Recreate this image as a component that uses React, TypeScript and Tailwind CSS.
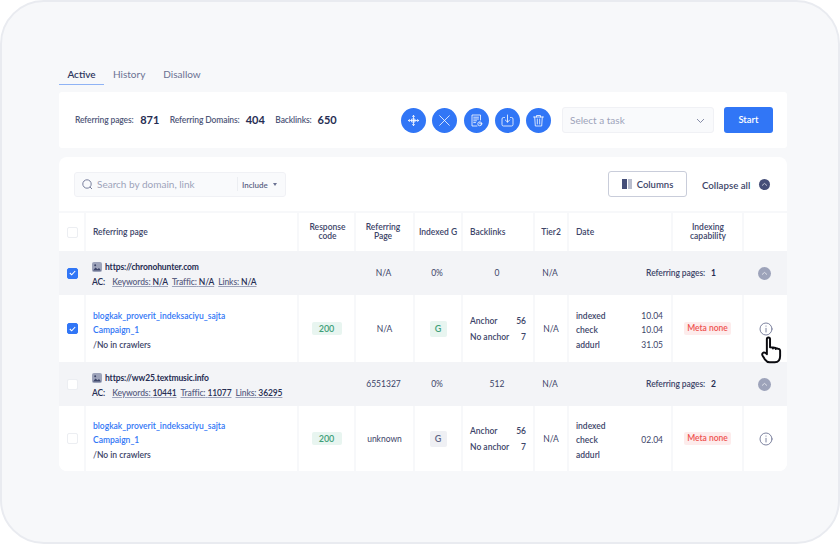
const COLS = "grid grid-cols-[25px_213px_57px_59px_48px_72px_34px_104px_71px_45px]";
const border = "flex items-center border-l-2 border-[#f7f8fa]";
const cell = `${border} justify-center text-center`;

function Check({ on }: { on?: boolean }) {
  return (
    <span className={`flex h-[11px] w-[11px] items-center justify-center rounded-[2px] border ${on ? "border-[#3176f6] bg-[#3176f6]" : "border-[#eceef2] bg-white"}`}>
      {on && (
        <svg width="7" height="6" viewBox="0 0 7 6" fill="none">
          <path d="M0.8 3L2.7 4.8L6.2 1" stroke="white" strokeWidth="1.1" />
        </svg>
      )}
    </span>
  );
}

function Circle({ children }: { children: React.ReactNode }) {
  return (
    <span className="flex h-[25px] w-[25px] items-center justify-center rounded-full bg-[#3176f6]">
      <svg width="15" height="15" viewBox="0 0 15 15" fill="none" stroke="white" strokeWidth="0.8" strokeLinecap="round" strokeLinejoin="round">
        {children}
      </svg>
    </span>
  );
}

function Chevron({ dark }: { dark?: boolean }) {
  return (
    <span className={`flex items-center justify-center rounded-full ${dark ? "h-[11px] w-[11px] bg-[#454e78]" : "h-[13px] w-[13px] bg-[#9da3ba]"}`}>
      <svg width="7" height="5" viewBox="0 0 7 5" fill="none">
        <path d="M1 3.6L3.5 1.4L6 3.6" stroke="white" strokeOpacity="0.8" strokeWidth="0.8" />
      </svg>
    </span>
  );
}

function Info() {
  return (
    <svg width="14" height="14" viewBox="0 0 14 14" fill="none" stroke="#6f7695" strokeWidth="0.9" strokeLinecap="round">
      <circle cx="7" cy="7" r="6" />
      <path d="M7 6.3V10" />
      <path d="M7 4V4.2" />
    </svg>
  );
}

function Group(props: { checked?: boolean; url: string; kw: string; tr: string; li: string; page: string; bl: string; count: string }) {
  return (
    <div className={`${COLS} h-[44px] bg-[#f3f4f7] text-[8.5px] text-[#3c4468]`}>
      <div className="flex items-center justify-center pl-[1px]"><Check on={props.checked} /></div>
      <div className="flex flex-col justify-center gap-[2px] pl-[8px] pt-[3px] tracking-[-0.12px]">
        <div className="flex items-center gap-[3px]">
          <svg width="10" height="10" viewBox="0 0 10 10" className="-mt-[1px]">
            <rect width="10" height="10" rx="2" fill="#9da3ba" />
            <path d="M1 8.5L3.5 5.5L5.5 7.2L7 6L9 8.5Z" fill="#3c4468" />
            <circle cx="3.2" cy="3.2" r="1" fill="#3c4468" />
          </svg>
          <span className="font-bold text-[#262d52]">{props.url}</span>
        </div>
        <div className="flex gap-[4px] font-semibold">
          <span className="mr-[3px] text-[#262d52]">AC:</span>
          <span className="underline decoration-[#9da3ba]"><span className="text-[#5b6284]">Keywords:</span> <span className="text-[#262d52]">{props.kw}</span></span>
          <span className="underline decoration-[#9da3ba]"><span className="text-[#5b6284]">Traffic:</span> <span className="text-[#262d52]">{props.tr}</span></span>
          <span className="underline decoration-[#9da3ba]"><span className="text-[#5b6284]">Links:</span> <span className="text-[#262d52]">{props.li}</span></span>
        </div>
      </div>
      <div />
      <div className="flex items-center justify-center pt-[1px]">{props.page}</div>
      <div className="flex items-center justify-center pt-[1px]">0%</div>
      <div className="flex items-center justify-center pt-[1px]">{props.bl}</div>
      <div className="flex items-center justify-center pt-[1px]">N/A</div>
      <div className="col-span-2 flex items-center justify-end gap-[6px] pr-[26px] pt-[1px] font-semibold">
        <span className="tracking-[-0.1px]">Referring pages:</span>
        <span className="font-bold text-[#262d52]">{props.count}</span>
      </div>
      <div className="flex items-center justify-center"><Chevron /></div>
    </div>
  );
}

function Row(props: { checked?: boolean; page: string; gTone: string; dates: string[]; single?: boolean; h: string }) {
  return (
    <div className={`${COLS} ${props.h} bg-white text-[8.5px] text-[#3c4468]`}>
      <div className="flex items-center justify-center pl-[1px]"><Check on={props.checked} /></div>
      <div className="flex flex-col justify-center gap-[3.5px] border-l-2 border-[#f7f8fa] pl-[7px] pt-[4px] font-semibold leading-[11px]">
        <span className="text-[#3176f6]">blogkak_proverit_indeksaciyu_sajta</span>
        <span className="text-[#3176f6]">Campaign_1</span>
        <span className="text-[#3c4468]">/No in crawlers</span>
      </div>
      <div className={cell}>
        <span className="flex h-[13px] w-[30px] items-center justify-center rounded-[2px] bg-[#e8f5f0] text-[9px] font-semibold text-[#3f9f78]">200</span>
      </div>
      <div className={`${cell} pt-[1px]`}>{props.page}</div>
      <div className={cell}>
        <span className={`flex h-[16px] w-[17px] items-center justify-center rounded-[2px] text-[9px] font-semibold ${props.gTone}`}>G</span>
      </div>
      <div className={`${border} flex-col justify-center gap-[5px] px-[7px] pt-[1px] font-semibold`}>
        <div className="flex w-full justify-between leading-[11px]"><span>Anchor</span><span>56</span></div>
        <div className="flex w-full justify-between leading-[11px]"><span>No anchor</span><span>7</span></div>
      </div>
      <div className={`${cell} pt-[1px]`}>N/A</div>
      <div className={`${border} justify-between pl-[7px] pr-[8px] pt-[4px]`}>
        <div className="flex flex-col gap-[3.5px] text-left font-semibold leading-[11px]">
          <span>indexed</span><span>check</span><span>addurl</span>
        </div>
        {props.single ? (
          <span>{props.dates[0]}</span>
        ) : (
          <div className="flex flex-col gap-[3.5px] text-right leading-[11px]">
            {props.dates.map((d, i) => <span key={i}>{d}</span>)}
          </div>
        )}
      </div>
      <div className={cell}>
        <span className="flex h-[13px] w-[47px] items-center justify-center rounded-[2px] bg-[#fdecec] text-[8.5px] font-semibold text-[#ef5350]">Meta none</span>
      </div>
      <div className={cell}><Info /></div>
    </div>
  );
}

export default function App() {
  return (
    <div className="relative h-[544px] w-[840px] bg-white" style={{ fontFamily: '"Lato", "Liberation Sans", sans-serif' }}>
      <div className="h-[544px] w-[840px] overflow-hidden rounded-[44px] border-2 border-[#e9ebf0] bg-[#f7f8fa] px-[57px] pt-[64px]">
        <div className="flex h-[19px] pt-[1px] text-[10px]">
          <span className="flex w-[45px] justify-center border-b border-[#8fb3f5] font-semibold text-[#2f3760]">Active</span>
          <span className="ml-[9px] text-[#6a7192]">History</span>
          <span className="ml-[18px] text-[#6a7192]">Disallow</span>
        </div>
        <div className="mt-[7px] flex h-[56px] w-[728px] items-center rounded-[3px] bg-white pl-[16px] pr-[14px]">
          <div className="flex w-[325px] items-center text-[8.5px] font-semibold tracking-[-0.12px] text-[#4f5779]">
            <span>Referring pages:</span>
            <span className="ml-[6.5px] text-[11px] font-bold tracking-normal text-[#262d52]">871</span>
            <span className="ml-[10.5px]">Referring Domains:</span>
            <span className="ml-[6px] text-[11px] font-bold tracking-normal text-[#262d52]">404</span>
            <span className="ml-[10.5px]">Backlinks:</span>
            <span className="ml-[6px] text-[11px] font-bold tracking-normal text-[#262d52]">650</span>
          </div>
          <div className="ml-[1px] flex gap-[6.3px]">
            <Circle>
              <path d="M7.5 2.5V12.5M2.5 7.5H12.5" />
              <path d="M6.5 3.5L7.5 2.3L8.5 3.5M6.5 11.5L7.5 12.7L8.5 11.5M3.5 6.5L2.3 7.5L3.5 8.5M11.5 6.5L12.7 7.5L11.5 8.5" />
              <rect x="6" y="6" width="3" height="3" />
            </Circle>
            <Circle><path d="M2.7 2.7L12.3 12.3M12.3 2.7L2.7 12.3" /></Circle>
            <Circle>
              <path d="M11.5 7V2H3V13H8" />
              <path d="M4.7 4.2H9.5M4.7 6H9.5M4.7 7.8H7.5M4.7 9.6H6.5" />
              <circle cx="10.8" cy="10.8" r="2" />
              <path d="M10.8 9.8V10.9H11.7" />
            </Circle>
            <Circle>
              <path d="M4.5 4.5H3.5A1.5 1.5 0 0 0 2 6V11.5A1.5 1.5 0 0 0 3.5 13H11.5A1.5 1.5 0 0 0 13 11.5V6A1.5 1.5 0 0 0 11.5 4.5H10.5" />
              <path d="M7.5 2V9M5.3 7L7.5 9.2L9.7 7" />
            </Circle>
            <Circle>
              <path d="M2.5 4H12.5M5.5 4V2.5H9.5V4M3.7 4L4.3 13H10.7L11.3 4M6.3 6V11M8.7 6V11" />
            </Circle>
          </div>
          <div className="ml-[10.8px] flex h-[26px] w-[152px] items-center justify-between rounded-[3px] border border-[#f0f1f5] bg-[#f9fafc] pl-[7px] pr-[8px] pt-[1px] text-[10px] text-[#9da3ba]">
            <span>Select a task</span>
            <svg width="9" height="6" viewBox="0 0 9 6" fill="none"><path d="M1 1L4.5 4.5L8 1" stroke="#6a7192" strokeWidth="0.8" /></svg>
          </div>
          <button className="ml-[10px] flex h-[26px] w-[49px] items-center justify-center rounded-[3px] bg-[#3176f6] pt-[1px] text-[9.5px] font-semibold text-white">Start</button>
        </div>

        <div className="mt-[9px] w-[728px] overflow-hidden rounded-[8px] bg-white">
          <div className="flex h-[54px] items-center pl-[15px] pr-[15px]">
            <div className="flex h-[25px] w-[212px] items-center rounded-[3px] border border-[#f0f1f5] bg-[#f9fafc] pl-[7px]">
              <svg width="11" height="11" viewBox="0 0 11 11" fill="none" stroke="#6a7192" strokeWidth="0.9"><circle cx="5" cy="5" r="4.2" /><path d="M8 8L10 10" /></svg>
              <span className="ml-[4px] w-[140px] pt-[1px] text-[10px] text-[#9da3ba]">Search by domain, link</span>
              <span className="flex h-[14px] items-center gap-[5px] border-l border-[#eceef2] pl-[4px] pt-[1px] text-[8px] font-semibold text-[#5b6284]">
                Include
                <svg width="4" height="3" viewBox="0 0 4 3"><path d="M0 0H4L2 3Z" fill="#6a7192" /></svg>
              </span>
            </div>
            <button className="ml-[322px] flex h-[26px] w-[79px] items-center justify-center gap-[5px] rounded-[3px] border border-[#c9cdda] bg-white pt-[2px] text-[9.5px] font-semibold text-[#3c4468]">
              <span className="-mt-[2px] flex h-[10px]">
                <span className="w-[5px] bg-[#454e78]" />
                <span className="ml-[1px] w-[4px] bg-[#b9bdcd]" />
              </span>
              Columns
            </button>
            <span className="ml-[15px] pt-[2px] text-[9.7px] font-semibold text-[#3c4468]">Collapse all</span>
            <span className="ml-[9px]"><Chevron dark /></span>
          </div>

          <div className={`${COLS} h-[40px] border-t-2 border-[#f7f8fa] text-[8.5px] font-semibold leading-[9px] text-[#3c4468]`}>
            <div className="flex items-center justify-center pl-[1px]"><Check /></div>
            <div className={`${border} pl-[7px]`}>Referring page</div>
            <div className={`${cell} pl-[2px]`}>Response<br />code</div>
            <div className={`${cell} pr-[3px]`}>Referring<br />Page</div>
            <div className={cell}>Indexed G</div>
            <div className={`${border} pl-[7px]`}>Backlinks</div>
            <div className={cell}>Tier2</div>
            <div className={`${border} pl-[7px]`}>Date</div>
            <div className={`${cell} pl-[1px]`}>Indexing<br />capability</div>
            <div className={cell} />
          </div>

          <Group checked url="https://chronohunter.com" kw="N/A" tr="N/A" li="N/A" page="N/A" bl="0" count="1" />
          <Row checked page="N/A" gTone="bg-[#e8f5f0] text-[#3f9f78]" dates={["10.04", "10.04", "31.05"]} h="h-[67px]" />
          <Group url="https://ww25.textmusic.info" kw="10441" tr="11077" li="36295" page="6551327" bl="512" count="2" />
          <Row page="unknown" gTone="bg-[#eff0f4] text-[#5b6284]" dates={["02.04"]} single h="h-[65px]" />
        </div>
      </div>

      <svg className="absolute left-[760px] top-[336px]" width="24" height="28" viewBox="0 0 24 30" fill="white" stroke="#0b0b10" strokeWidth="2.1" strokeLinejoin="round" strokeLinecap="round">
        <path d="M6.5 17V3.2A1.7 1.7 0 0 1 9.9 3.2V12L13 12.3V13.5V12.3L16 12.8V14V13L18.5 13.6A2.3 2.3 0 0 1 20.7 16V21.5C20.7 25.5 18.5 28.2 15 28.2H9.5C6.5 28.2 5.5 26.5 4 24.5L1.8 20.8C1 19.3 2 17.6 3.5 17.6C4.8 17.6 5.7 18.5 6.5 19.5Z" />
      </svg>
    </div>
  );
}
